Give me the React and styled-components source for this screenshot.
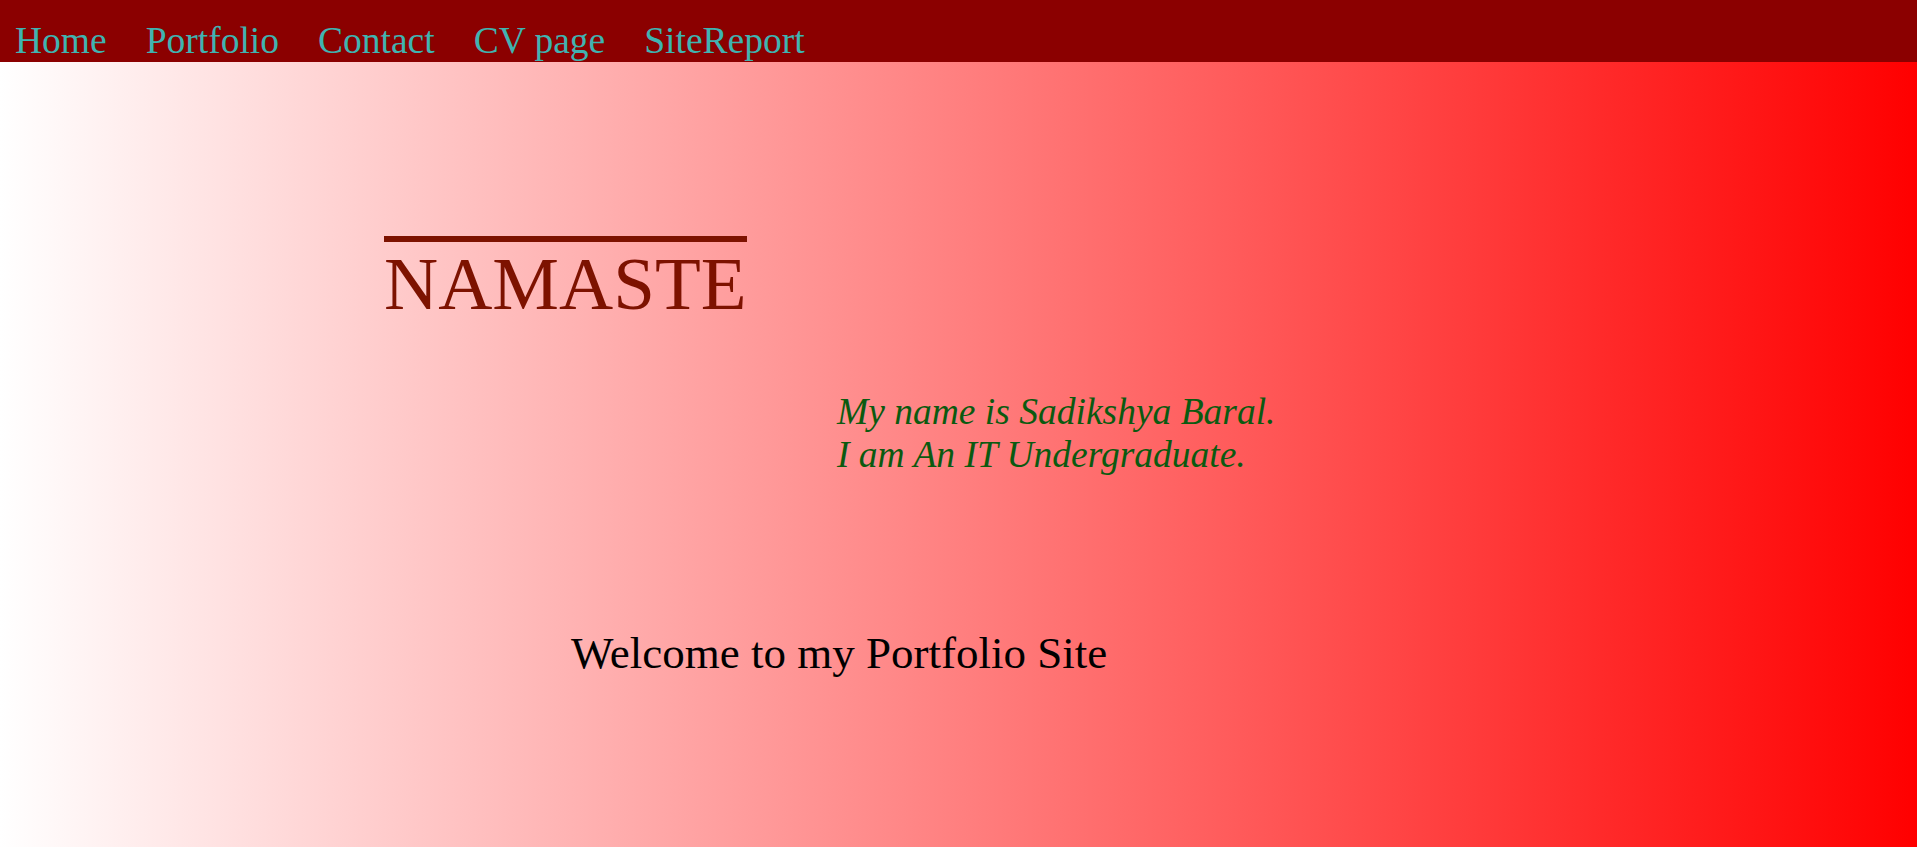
import React from 'react';
import styled, { createGlobalStyle } from 'styled-components';

const GlobalStyle = createGlobalStyle`
    html, body {
        margin: 0;
        padding: 0;
    }
    body {
        font-family: "Liberation Serif", "Times New Roman", serif;
    }
`;

const Navigation = styled.nav`
    display: flex;
    align-items: flex-end;
    gap: 39px;
    height: 62px;
    padding-left: 15px;
    background: #8b0000;
    a {
        font-size: 37.5px;
        line-height: 43px;
        color: #40b3b0;
        text-decoration: none;
        cursor: pointer;
    }
`;

const Main = styled.main`
    height: calc(100vh - 62px);
    overflow: hidden;
    background: linear-gradient(to right, #ffffff, #ff0000);
`;

const Title = styled.h1`
    display: inline-block;
    margin: 174px 0 0 384px;
    border-top: 6px solid #7d1200;
    font-size: 75px;
    font-weight: normal;
    line-height: 84px;
    color: #7d1200;
`;

const Intro = styled.p`
    margin: 64px 0 0 837px;
    font-size: 37.5px;
    font-style: italic;
    line-height: 43px;
    color: #0b5a10;
`;

const Welcome = styled.h2`
    margin: 151px 0 0 571px;
    font-size: 45px;
    font-weight: normal;
    line-height: 52px;
    color: #000;
`;

const links = ['Home', 'Portfolio', 'Contact', 'CV page', 'SiteReport'];

export default function App() {
    return (
        <div>
            <GlobalStyle />
            <Navigation>
                {links.map((item, i) => (
                    <a key={i + item} href={'#' + item}>{item}</a>
                ))}
            </Navigation>
            <Main>
                <Title>NAMASTE</Title>
                <Intro>
                    My name is Sadikshya Baral.<br />
                    I am An IT Undergraduate.
                </Intro>
                <Welcome>Welcome to my Portfolio Site</Welcome>
            </Main>
        </div>
    );
}
